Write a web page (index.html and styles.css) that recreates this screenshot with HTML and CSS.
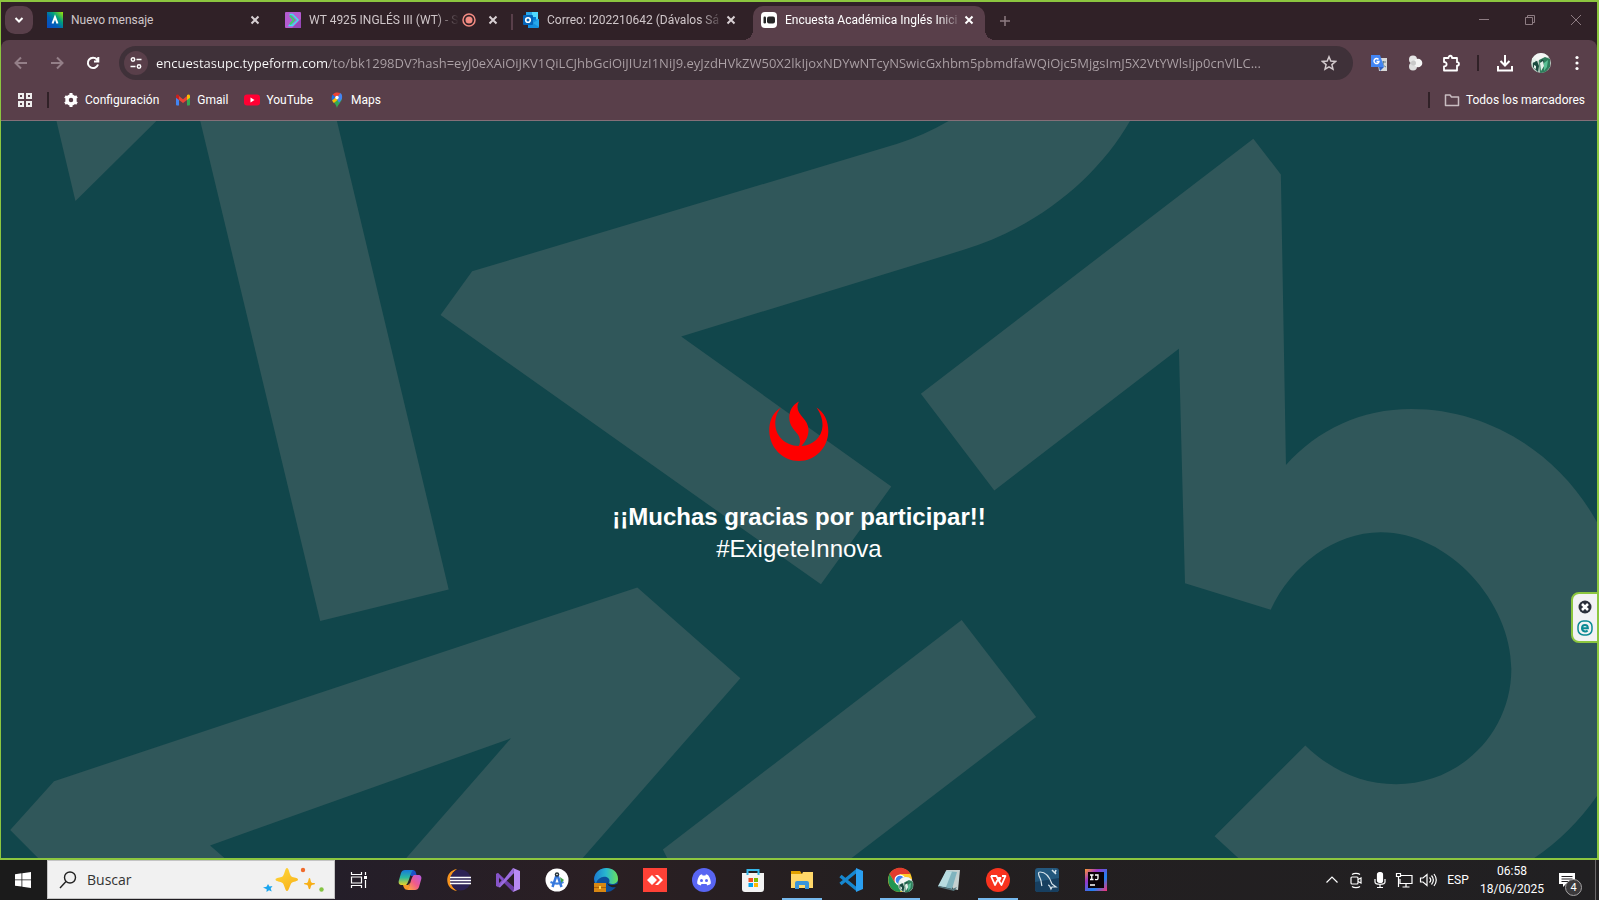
FILE: index.html
```html
<!DOCTYPE html>
<html lang="es">
<head>
<meta charset="utf-8">
<title>Encuesta Académica Inglés Inicio</title>
<link rel="stylesheet" href="styles.css">
</head>
<body>
<div class="browser">
  <header class="chrome">
    <div class="tabstrip">
      <button class="tab-search" aria-label="Buscar pestañas"><svg width="10" height="10" viewBox="0 0 10 10"><path d="M1.500 3l3.500 3.500L8.500 3" fill="none" stroke="#fff" stroke-width="2"/></svg></button>
      <div class="tabs">
        <div class="tab">
          <svg class="fav" viewBox="0 0 16 16"><defs><linearGradient id="nm" x1="1" y1="0" x2="0" y2="1"><stop offset="0" stop-color="#a5e800"/><stop offset=".35" stop-color="#00a07c"/><stop offset=".6" stop-color="#0061b8"/><stop offset="1" stop-color="#0a49c0"/></linearGradient></defs><path fill="url(#nm)" d="M0 0h16v16H0z"/><path d="M5.500 11.500L8 5l2.500 6.500" fill="none" stroke="#fff" stroke-width="2"/></svg>
          <span class="title">Nuevo mensaje</span>
          <button class="close" aria-label="Cerrar"><svg width="10" height="10" viewBox="0 0 10 10"><path d="M1.500 1.500l7 7m0-7l-7 7"/></svg></button>
        </div>
        <div class="tab">
          <svg class="fav" viewBox="0 0 16 16"><rect width="16" height="16" rx="1" fill="#b45bd0"/><path d="M7 16L16 7v9z" fill="#9747b8"/><path d="M4.500 2.500h3L13 8l-5.500 5.500h-3L8 10" fill="none" stroke="#40e0ee" stroke-width="1.500"/><path d="M5 3.500L9 8l-4 4.500" fill="none" stroke="#39d06d" stroke-width="2"/></svg>
          <span class="title fade">WT 4925 INGLÉS III (WT) - S</span>
          <svg class="rec" viewBox="0 0 16 16"><circle cx="8" cy="8" r="6" fill="none" stroke="#f28b82" stroke-width="1.500"/><circle cx="8" cy="8" r="3.500" fill="#f28b82"/></svg>
          <button class="close" aria-label="Cerrar"><svg width="10" height="10" viewBox="0 0 10 10"><path d="M1.500 1.500l7 7m0-7l-7 7"/></svg></button>
        </div>
        <div class="tab divided">
          <svg class="fav" viewBox="0 0 16 16"><path fill="#50d9ff" d="M8 0h7v8H8z"/><path fill="#28a8ea" d="M3 0h6v8H3z"/><path fill="#0078d4" d="M4 5h9v6H4z"/><path fill="#1490df" d="M5 9l11-2v8a1 1 0 0 1-1 1H5z"/><path fill="#28a8ea" d="M16 7v8l-6-4z"/><rect y="3" width="10" height="10" rx="1" fill="#0364b8"/><circle cx="5" cy="8" r="2.300" fill="none" stroke="#fff" stroke-width="1.600"/></svg>
          <span class="title fade">Correo: I202210642 (Dávalos Sá</span>
          <button class="close" aria-label="Cerrar"><svg width="10" height="10" viewBox="0 0 10 10"><path d="M1.500 1.500l7 7m0-7l-7 7"/></svg></button>
        </div>
        <div class="tab active">
          <svg class="fav" viewBox="0 0 16 16"><rect width="16" height="16" rx="4" fill="#fff"/><rect x="2.500" y="4.500" width="2.500" height="7" rx="1.200" fill="#262627"/><rect x="6" y="4.500" width="8" height="7" rx="2" fill="#262627"/></svg>
          <span class="title fade">Encuesta Académica Inglés Inici</span>
          <button class="close" aria-label="Cerrar"><svg width="10" height="10" viewBox="0 0 10 10"><path d="M1.500 1.500l7 7m0-7l-7 7"/></svg></button>
        </div>
      </div>
      <button class="new-tab" aria-label="Nueva pestaña"><svg width="12" height="12" viewBox="0 0 12 12"><path d="M6 1v10M1 6h10" stroke="#8d7c82" stroke-width="1.500"/></svg></button>
      <div class="window-controls">
        <button aria-label="Minimizar"><svg width="12" height="12" viewBox="0 0 12 12"><path d="M1 5.500h10"/></svg></button>
        <button aria-label="Restaurar"><svg width="12" height="12" viewBox="0 0 12 12"><path d="M1.500 3.500h7v7h-7zM3.500 3.500v-2h7v7h-2"/></svg></button>
        <button aria-label="Cerrar ventana"><svg width="12" height="12" viewBox="0 0 12 12"><path d="M1 1l10 10M11 1L1 11"/></svg></button>
      </div>
    </div>

    <div class="toolbar">
      <button class="nav" aria-label="Atrás"><svg class="dim" width="16" height="16" viewBox="0 0 16 16"><path d="M14 8H3M8 2.500L2.500 8 8 13.500"/></svg></button>
      <button class="nav" aria-label="Adelante"><svg class="dim" width="16" height="16" viewBox="0 0 16 16"><path d="M2 8h11M8 2.500L13.500 8 8 13.500"/></svg></button>
      <button class="nav" aria-label="Recargar"><svg width="16" height="16" viewBox="0 0 16 16"><path d="M13 9.500A5.200 5.200 0 1 1 12 4.500l1.500 1.700M13.300 2v4.500H9" /></svg></button>
      <div class="omnibox">
        <button class="site-info" aria-label="Información del sitio"><svg width="14" height="14" viewBox="0 0 14 14"><circle cx="4" cy="3.500" r="1.700"/><path d="M7.500 3.500h5M1.500 10.500h5"/><circle cx="10" cy="10.500" r="1.700"/></svg></button>
        <input class="url" type="text" aria-label="Dirección" value="encuestasupc.typeform.com/to/bk1298DV?hash=eyJ0eXAiOiJKV1QiLCJhbGciOiJIUzI1NiJ9.eyJzdHVkZW50X2lkIjoxNDYwNTcyNSwicGxhbm5pbmdfaWQiOjc5MjgsImJ5X2VtYWlsIjp0cnVlLC...">
        <button class="star" aria-label="Añadir a marcadores"><svg width="16" height="16" viewBox="0 0 16 16"><path d="M8 1.800l1.800 4.300 4.700.4-3.600 3.100 1.100 4.600L8 11.800l-4 2.400 1.100-4.600L1.500 6.500l4.700-.4z"/></svg></button>
      </div>
      <div class="extensions">
        <button aria-label="Traductor"><svg width="18" height="18" viewBox="0 0 18 18"><path fill="#d8d8d8" d="M7 4h10v13H9z"/><path d="M11 8h5M13.500 7v1c0 2-1 4-3 5M12 9c1 2 2 3 4 4" stroke="#607d8b" fill="none"/><path fill="#4285f4" d="M1 1h9l4 12H1z"/><path fill="#3060c0" d="M9 13h5l-4 4z"/><path d="M8.500 5.500A2.500 2.500 0 1 0 9 7.500H6.500" fill="none" stroke="#fff" stroke-width="1.400"/></svg></button>
        <button aria-label="Extensión"><svg width="18" height="18" viewBox="0 0 18 18"><circle cx="7" cy="5.500" r="4" fill="#e6e6e6"/><circle cx="7" cy="12.500" r="4" fill="#dedede"/><circle cx="12" cy="9" r="4.300" fill="#f4f4f4" /><circle cx="7.500" cy="9" r="2.500" fill="#c9c9c9"/></svg></button>
        <button aria-label="Extensiones"><svg width="18" height="18" viewBox="0 0 18 18"><path d="M2 4h4.500C6.500 1 10 1 10 4H15v4.200c2.600 0 2.600 3.400 0 3.400V16.500H2v-4.200c3.500 0 3.500-4.300 0-4.300z" fill="none" stroke="#fff" stroke-width="1.800" stroke-linejoin="round"/></svg></button>
        <span class="bar"></span>
        <button aria-label="Descargas"><svg width="18" height="18" viewBox="0 0 18 18"><path d="M9 1v10M4.500 7L9 11.500 13.500 7M2 12v4.500h14V12" fill="none" stroke="#fff" stroke-width="2"/></svg></button>
        <button aria-label="Perfil"><svg width="20" height="20" viewBox="0 0 20 20"><defs><clipPath id="av"><circle cx="10" cy="10" r="10"/></clipPath></defs><g id="avatar" clip-path="url(#av)"><path fill="#b9cdc3" d="M0 0h20v20H0z"/><path fill="#f4f6f5" d="M5 0h10l3 4-7 2-5 2-5-2z"/><path fill="#2f7d5c" d="M8 7l6-3 5 2v8l-5 6H9z"/><path fill="#1a4a3f" d="M2 9l4-1 2 5-1 6-5-5zM11 6l2 2-1 3-3-2z"/><path fill="#e4f0ea" d="M9 10l3-2 1 5-3 5zM1 4l4 2-1 3-3 1zM3 12l2 1v3l-2-1z"/><path fill="#5ac095" d="M13 10l4-3-1 7-3 4z"/></g></svg></button>
        <button aria-label="Menú"><svg width="18" height="18" viewBox="0 0 18 18" fill="#fff"><circle cx="9" cy="3.500" r="1.600"/><circle cx="9" cy="9" r="1.600"/><circle cx="9" cy="14.500" r="1.600"/></svg></button>
      </div>
    </div>

    <nav class="bookmarks">
      <button class="apps" aria-label="Aplicaciones"><svg width="16" height="16" viewBox="0 0 16 16"><path d="M2 2h4v4H2zM10 2h4v4h-4zM2 10h4v4H2zM10 10h4v4h-4z" fill="none" stroke="#eee" stroke-width="2"/></svg></button>
      <span class="bar"></span>
      <a href="#"><svg width="16" height="16" viewBox="0 0 16 16"><circle cx="8" cy="8" r="4" fill="none" stroke="#fff" stroke-width="3.500"/><path d="M8 1v3M8 12v3M2 4.500L4.500 6M11.500 10l2.500 1.500M2 11.500L4.500 10M11.500 6L14 4.500" stroke="#fff" stroke-width="3"/></svg>Configuración</a>
      <a href="#"><svg width="16" height="16" viewBox="0 0 16 16"><path fill="#4285f4" d="M1 4h3v9.500H2a1 1 0 0 1-1-1z"/><path fill="#34a853" d="M12 4h3v8.500a1 1 0 0 1-1 1h-2z"/><path fill="#ea4335" d="M4 4l4 3.200L12 4v4l-4 3-4-3z"/><path fill="#c5221f" d="M1 4c0-1.500 1.600-2 3-1v5L1 5.800z"/><path fill="#fbbc04" d="M15 4c0-1.500-1.600-2-3-1v5l3-2.200z"/></svg>Gmail</a>
      <a href="#"><svg width="16" height="16" viewBox="0 0 16 16"><rect y="2.500" width="16" height="11" rx="3" fill="#ff0033"/><path fill="#fff" d="M6.500 5.500v5L10.500 8z"/></svg>YouTube</a>
      <a href="#"><svg width="16" height="16" viewBox="0 0 16 16"><path fill="#34a853" d="M3 8c2 3 4 4 5 8 1-4 5-6 5-10H9z"/><path fill="#fbbc04" d="M3 8.300L9 3l2 3-6.200 5C4 10 3.300 9 3 8.300z"/><path fill="#4285f4" d="M7 5l4.500-4C13 2.200 13.400 4 13 6.500 12.500 8 11 9.500 10 10.700z"/><path fill="#1a73e8" d="M3.700 2.500L7 5 3 8.500C2.300 6 2.600 4 3.700 2.500z"/><path fill="#ea4335" d="M3.700 2.500C5.500 0 9 0 11.500 1L7.500 6z"/><circle cx="8" cy="5.500" r="1.700" fill="#fff"/></svg>Maps</a>
      <span class="bar push"></span>
      <a class="all" href="#"><svg width="16" height="16" viewBox="0 0 16 16"><path d="M1.500 3h4.500l1.500 2h7v8.500h-13z" fill="none" stroke="#c9bdc1" stroke-width="1.500" stroke-linejoin="round"/></svg>Todos los marcadores</a>
    </nav>
  </header>

  <main class="page">
    <svg class="backdrop" viewBox="1 118 1565 724" preserveAspectRatio="xMidYMid slice" aria-hidden="true">
      <path d="M55 117H155L74 197z"/>
      <path d="M196 117H330L440 578 314 609z"/>
      <path d="M933 117Q908 132 880 141L463 266 432 309 805 573 874 477 668 330 945 245C1020 222 1078 172 1109 117z"/>
      <path d="M1229 136L1256 171 1261 456C1292 421 1335 401 1384 401C1460 401 1530 445 1567 514L1600 580V720L1567 779Q1540 818 1502 843H1216L1191 820 1280 731C1305 755 1335 769 1369 769C1432 769 1482 718 1482 656C1482 590 1420 522 1354 522C1308 522 1266 555 1246 598L1162 572 1156 342 975 481 903 386z"/>
      <path d="M625 576L726 665 570 843H397L501 724 206 829 222 843H39L10 814 53 766z"/>
      <path d="M943 608L1016 703 833 843H655L650 833z"/>
    </svg>
    <section class="thanks">
      <svg class="logo" width="60" height="60" viewBox="0 0 60 60" fill="#f00" aria-label="UPC"><path d="M12 6.500C3 12 0 21 .3 30.500C.8 47 14 60 30 60S59 47 59.300 30.500C59.500 20 55 11 47.500 6.500C52 13 53.700 19 53.500 25C53 36 44 44.500 32.500 45C37 40 39.500 35 39.500 29C39.500 18 28.500 15 28.500 6C28.500 3.500 29 2 30 .5C24 3 20 10 20.300 17C20.700 29 31 31 31 40C31 42 30.500 44 29.500 45C16 44.500 6.500 35 6.300 23C6.200 17 8 11 12 6.500z"/></svg>
      <h1>¡¡Muchas gracias por participar!!</h1>
      <p>#ExigeteInnova</p>
    </section>
    <aside class="widget">
      <button aria-label="Cerrar panel"><svg width="14" height="14" viewBox="0 0 14 14"><circle cx="7" cy="7" r="6.500" fill="#2b2f3a"/><path d="M4 4l6 6M10 4l-6 6" stroke="#fff" stroke-width="2.500"/></svg></button>
      <button aria-label="ESET"><svg width="16" height="16" viewBox="0 0 16 16"><rect x="1" y="1" width="14" height="14" rx="5.500" fill="none" stroke="#0b8a94" stroke-width="1.500"/><path d="M4.700 8.200h6.200C10.900 3.800 5 3.800 5 8.200c0 3.500 4 3.800 5.600 2.300" fill="none" stroke="#0b8a94" stroke-width="2"/></svg></button>
    </aside>
  </main>
</div>

<footer class="taskbar">
  <button class="start" aria-label="Inicio"><svg width="16" height="16" viewBox="0 0 16 16" fill="#fff"><path d="M0 2.200L6.500 1.300v6.200H0zM7.300 1.200L16 0v7.500H7.300zM0 8.300h6.500v6.300L0 13.700zM7.300 8.300H16V16l-8.700-1.200z"/></svg></button>
  <label class="search">
    <svg width="18" height="18" viewBox="0 0 18 18"><circle cx="11" cy="6.500" r="5.500" fill="none" stroke="#222" stroke-width="1.400"/><path d="M7 10.500L1 17" stroke="#222" stroke-width="1.400"/></svg>
    <input type="text" placeholder="Buscar" aria-label="Buscar">
    <svg width="62" height="26" viewBox="0 0 62 26"><defs><linearGradient id="gold" x2="1" y2="1"><stop offset="0" stop-color="#ffd83b"/><stop offset="1" stop-color="#f5a30d"/></linearGradient></defs><path fill="url(#gold)" d="M24 1c2 0 2.500 7 4.500 8.500S35 10.500 35 12.500s-5 2-6.500 3.500S26 24 24 24s-2.500-6.500-4.500-8-7-1.500-7-3.500 5-1.500 7-3S22 1 24 1zM46.500 11c1.200 0 1 3.500 2 4.500s3.500 0 3.500 1.200-2.500.5-3.500 1.500-.8 4-2 4-1-3-2-4-3.500-.3-3.500-1.500 2.500-.2 3.500-1.200.8-4.500 2-4.500z"/><path fill="#1ba5ee" d="M5 17l1.500 2.500 3-.5-1.800 2.500 1 3-2.700-1.300L3.500 25l.2-2.700L0 20.500l3.500-.8z"/><circle cx="40" cy="3" r="2.200" fill="#f06a2c"/><circle cx="58.500" cy="22.500" r="2.200" fill="#84c441"/></svg>
  </label>
  <div class="apps-row">
    <button aria-label="Vista de tareas"><svg width="18" height="18" viewBox="0 0 18 18"><path d="M1.500 1v2.500h10V1M1.500 17v-2.500h10V17M1.500 6h10v6h-10zM15.500 1v3M15.500 9v8" fill="none" stroke="#fff" stroke-width="1.200"/><path fill="#fff" d="M14 5h3v3h-3z"/></svg></button>
    <button aria-label="Copilot"><svg width="24" height="24" viewBox="0 0 24 24"><defs><linearGradient id="c1" x2="0" y2="1"><stop offset="0" stop-color="#1679dc"/><stop offset=".5" stop-color="#2bb8a0"/><stop offset="1" stop-color="#e8d428"/></linearGradient><linearGradient id="c2" x1="1" x2="0" y2="1"><stop offset="0" stop-color="#b45be8"/><stop offset=".5" stop-color="#f05a8b"/><stop offset="1" stop-color="#ffb03a"/></linearGradient></defs><path fill="#1c52c8" d="M9 2h6c3 0 3 4 4 6h-6z"/><path fill="url(#c1)" d="M7 2h8c-3 3-4 13-7 15H4c-3 0-4-2-3-5l2-7c.7-2 2-3 4-3z"/><path fill="url(#c2)" d="M17 22H9c3-3 4-13 7-15h4c3 0 4 2 3 5l-2 7c-.7 2-2 3-4 3z"/><path fill="#f7982a" d="M5 17h5l2-2-1 6c-3 2-5 0-6-4z"/></svg></button>
    <button aria-label="Eclipse"><svg width="24" height="24" viewBox="0 0 24 24"><path fill="#f7941e" d="M10 1C-3 3-3 21 10 23 2 18 2 6 10 1z"/><circle cx="13.500" cy="12" r="10.500" fill="#2c2255"/><path d="M3 9.500h21M3 12.500h21M3 15.500h21" stroke="#fff" stroke-width="1.600"/></svg></button>
    <button aria-label="Visual Studio"><svg width="24" height="24" viewBox="0 0 24 24"><path fill="#6c3fa8" d="M0 6l2-1 16 14-1 5L0 7z"/><path fill="#8654c8" d="M0 6l2-1 5 5.500v3L2 19l-2-1zM3 9v6l3-3z" fill-rule="evenodd"/><path fill="#9b6ce0" d="M2 19L17 0l1 5L4 19.500z"/><path fill="#b88af5" d="M17 0l7 3v18l-7 3 1-4V5z"/></svg></button>
    <button aria-label="Android Studio"><svg width="24" height="24" viewBox="0 0 24 24"><circle cx="12" cy="12" r="11.500" fill="#fff"/><path d="M5.500 14c4 2 9 2 13 0" fill="none" stroke="#3d7fe0" stroke-width="2"/><path fill="#43a047" d="M15 9l4 3-3 3z"/><path d="M12 6L7.500 19M12 6l4.500 13" fill="none" stroke="#3778dc" stroke-width="2.500"/><circle cx="12" cy="6.500" r="2.200" fill="#263238"/><circle cx="12" cy="6.500" r=".8" fill="#fff"/></svg></button>
    <button aria-label="Edge"><svg width="24" height="24" viewBox="0 0 24 24"><defs><linearGradient id="ed" x2="1"><stop offset="0" stop-color="#1b7ad0"/><stop offset=".5" stop-color="#28b8cf"/><stop offset="1" stop-color="#6be05a"/></linearGradient></defs><circle cx="12" cy="12" r="12" fill="#0c4e9b"/><path fill="url(#ed)" d="M0 11C2-4 24-3 24 11c0 5-6 6-9 4 2-4-2-7-6-6-4 .5-7 4-7 8z"/><path fill="#231d21" d="M13 13c0 4 4 5 10 3l1 1-2 2c-5 1-9-1-9-6z"/><path fill="#d88713" d="M0 15h12v9H0z"/><path fill="#a85f08" d="M0 19h12v1H0z"/><path fill="#ffd24a" d="M5 18h2v3H5z"/></svg></button>
    <button aria-label="AnyDesk"><svg width="24" height="24" viewBox="0 0 24 24"><path fill="#ff4136" d="M0 0h24v24H0z"/><path fill="#fff" d="M9 7l5 5-5 5-5-5zM12 7h3l5 5-5 5h-3l5-5z"/></svg></button>
    <button aria-label="Discord"><svg width="24" height="24" viewBox="0 0 24 24"><circle cx="12" cy="12" r="12" fill="#5865f2"/><path fill="#fff" d="M8 7l2-.7.6 1.200h2.800l.6-1.200 2 .7c2 2.500 3 6 2.800 8.500-1 1-2 1.500-3.500 2L14.500 16h-5l-.8 1.500c-1.500-.5-2.500-1-3.500-2C5 13 6 9.500 8 7z"/><circle cx="9.500" cy="12.500" r="1.500" fill="#5865f2"/><circle cx="14.500" cy="12.500" r="1.500" fill="#5865f2"/></svg></button>
    <button aria-label="Microsoft Store"><svg width="24" height="24" viewBox="0 0 24 24"><path fill="#f3f3f3" d="M1 5h22v16a3 3 0 0 1-3 3H4a3 3 0 0 1-3-3z"/><path d="M6.500 7V2h11v5" fill="none" stroke="#35b6e8" stroke-width="2"/><path fill="#f25022" d="M7.500 10H12v4H7.500z"/><path fill="#7fba00" d="M13 10h4v4h-4z"/><path fill="#00a4ef" d="M7.500 15H12v4H7.500z"/><path fill="#ffb900" d="M13 15h4v4h-4z"/></svg></button>
    <button class="running" aria-label="Explorador de archivos"><svg width="24" height="24" viewBox="0 0 24 24"><path fill="#e0a100" d="M1 3h9l2 3H1z"/><path fill="#ffd869" d="M1 6h11l1-2h10v16H1z"/><path fill="#3a95d9" d="M5 21v-6a2 2 0 0 1 2-2h10a2 2 0 0 1 2 2v6h-4v-4H9v4z"/></svg></button>
    <button aria-label="Visual Studio Code"><svg width="24" height="24" viewBox="0 0 24 24"><path d="M1.500 8L18 21.500M1.500 16L18 2.500" stroke="#1687cf" stroke-width="3.500"/><path fill="#2a9ff0" d="M17 0l7 3v18l-7 3z"/></svg></button>
    <button class="running" aria-label="Chrome"><svg width="28" height="26" viewBox="0 0 28 26"><circle cx="14" cy="13" r="12" fill="#ffc928"/><path fill="#e33b2e" d="M3.600 7C8-1.500 20-1.500 24.400 7H14l-5 9z"/><path fill="#219653" d="M3.600 7C0 14 4 25 14 25l5-9H9z"/><circle cx="14" cy="13" r="5.500" fill="#fff"/><circle cx="14" cy="13" r="4.300" fill="#3f82ee"/><use href="#avatar" transform="translate(12 10) scale(.78)"/></svg></button>
    <button aria-label="Bloc de notas"><svg width="24" height="24" viewBox="0 0 24 24"><path fill="#c4d0d0" d="M9 2l14 0-2 20-5-1z"/><path fill="#7fb3be" d="M9 3l11 1-5 17-13-3z"/><path fill="#b8dce0" d="M9 3l6 .5L9 19l-8-1z"/><path fill="#57777d" d="M1 18l14 3 5-2-3 4-16-4z"/></svg></button>
    <button class="running" aria-label="WPS Office"><svg width="24" height="24" viewBox="0 0 24 24"><circle cx="12" cy="12" r="12" fill="#f8331e"/><path d="M5 8h5.500l2 5M5 8l4 9 3.500-7h2l-1.500 3 2.500 4L19.500 8H16" fill="none" stroke="#fff" stroke-width="1.800" stroke-linejoin="round"/></svg></button>
    <button aria-label="MySQL Workbench"><svg width="24" height="24" viewBox="0 0 24 24"><rect width="24" height="24" rx="3" fill="#24587d"/><path fill="#173f60" d="M0 14l24-4v11a3 3 0 0 1-3 3H3a3 3 0 0 1-3-3z"/><path d="M7 18c-1-2 0-4-2-8-2-4-2-6 0-6 6 0 10 6 12 12l4 3-4 0-1 2c-1-3-2-4-3-4" fill="none" stroke="#d7e4ec" stroke-width="1.200"/><path d="M17 2l4 4M21 2l-1 3" stroke="#d7e4ec" stroke-width="1.500"/></svg></button>
    <button aria-label="IntelliJ IDEA"><svg width="24" height="24" viewBox="0 0 24 24"><defs><linearGradient id="ij" x2="1" y2="1"><stop offset="0" stop-color="#ff9a2e"/><stop offset=".3" stop-color="#9b35c5"/><stop offset=".65" stop-color="#1a84f5"/><stop offset="1" stop-color="#ff2e70"/></linearGradient></defs><path fill="url(#ij)" d="M1 1h22v22H1z"/><path fill="#0a0308" d="M4 4h16v16H4z"/><path d="M6 7h3.500M6 11.500h3.500M7.750 7v4.500M11 7h3v3.300c0 1.500-1.500 1.700-3 1M6 17h5" fill="none" stroke="#fff" stroke-width="1.300"/></svg></button>
  </div>
  <div class="tray">
    <button aria-label="Mostrar iconos ocultos"><svg width="18" height="18" viewBox="0 0 18 18"><path d="M3.500 11.500L9 6l5.500 5.500"/></svg></button>
    <button aria-label="Reunión"><svg width="18" height="18" viewBox="0 0 18 18"><rect x="4" y="6" width="7" height="7" rx="1"/><path d="M11 8.500l3-1.500v5l-3-1.500M5 3.500c2-1.500 6-1.500 8 0M5 15.500c2 1.500 6 1.500 8 0"/></svg></button>
    <button aria-label="Micrófono"><svg width="18" height="18" viewBox="0 0 18 18"><rect x="6.500" y="1.500" width="5" height="10" rx="2"/><path d="M4 8v3c0 3 10 3 10 0V8M9 13.500V17M6 16.500h6"/></svg></button>
    <button class="net" aria-label="Red"><svg width="18" height="18" viewBox="0 0 18 18"><path d="M6 4.500h11v8H5V8M11 12.500v3M7.500 16h7M1.500 2.500h4v3h-4zM3.500 5.500V16"/></svg></button>
    <button aria-label="Volumen"><svg width="18" height="18" viewBox="0 0 18 18"><path d="M1.500 7v4H4l4 3.500v-11L4 7zM10.500 6.500c1.500 1.500 1.500 3.500 0 5M12.500 4.500c2.500 3 2.500 6 0 9M15 3c3 4 3 8 0 12"/></svg></button>
    <button class="lang">ESP</button>
    <button class="clock"><span>06:58</span><span>18/06/2025</span></button>
    <button class="notify" aria-label="Notificaciones"><svg width="18" height="18" viewBox="0 0 18 18"><path class="bubble" d="M1 2h16v11H8l-3 3v-3H1z"/><path class="lines" d="M3.500 5.500h11M3.500 8h11M3.500 10.500h8"/></svg><span class="badge">4</span></button>
  </div>
</footer>
</body>
</html>
```
FILE: styles.css
```css
* { box-sizing: border-box; }

html, body { height: 100%; }

body {
  margin: 0;
  display: flex;
  flex-direction: column;
  overflow: hidden;
  background: #231d21;
  color: #fff;
  font: 12px/16px Roboto, "Open Sans", sans-serif;
}

button {
  display: flex;
  align-items: center;
  justify-content: center;
  flex: none;
  padding: 0;
  border: 0;
  background: none;
  color: inherit;
  font: inherit;
}

svg { display: block; flex: none; }
a { color: inherit; text-decoration: none; }

.browser {
  flex: 1;
  min-height: 0;
  display: flex;
  flex-direction: column;
  border: solid #8cc63f;
  border-width: 2px 2px 2px 1px;
  background: #302127;
}

/* tabs */
.tabstrip { display: flex; align-items: center; height: 38px; background: #302127; }
.tab-search { width: 28px; height: 28px; margin: 0 0 2px 4px; border-radius: 10px; background: #593f4a; }
.tabs { display: flex; align-self: stretch; margin-left: 6px; padding-top: 4px; }
.tab {
  position: relative;
  display: flex;
  align-items: center;
  width: 238px;
  padding: 0 17px 6px 8px;
  color: #cfc6c9;
}
.fav { width: 16px; height: 16px; }
.title {
  flex: 1;
  min-width: 0;
  margin: 0 2px 0 8px;
  white-space: nowrap;
}
.fade {
  -webkit-mask-image: linear-gradient(to left, transparent, #000 24px);
  mask-image: linear-gradient(to left, transparent, #000 24px);
}
.rec { width: 16px; height: 16px; margin-right: 11px; }
.close { width: 10px; height: 16px; }
.close path { fill: none; stroke: #d8d0d3; stroke-width: 2; }
.divided::before {
  content: "";
  position: absolute;
  left: -4px;
  top: 8px;
  width: 2px;
  height: 16px;
  background: #593f4a;
}
.active {
  width: 232px;
  padding-right: 11px;
  border-radius: 10px 10px 0 0;
  background: #593f4a;
  color: #fff;
}
.active .close path { stroke: #fff; }
.active::before, .active::after {
  content: "";
  position: absolute;
  bottom: 0;
  width: 10px;
  height: 10px;
}
.active::before { left: -10px; background: radial-gradient(circle at 0 0, transparent 10px, #593f4a 10px); }
.active::after { right: -10px; background: radial-gradient(circle at 100% 0, transparent 10px, #593f4a 10px); }
.new-tab { width: 28px; height: 28px; margin-left: 6px; }
.window-controls { display: flex; gap: 4px; margin-left: auto; padding-bottom: 2px; }
.window-controls button { width: 42px; height: 34px; }
.window-controls path { fill: none; stroke: #8d7c82; }

/* toolbar */
.toolbar {
  display: flex;
  align-items: center;
  height: 46px;
  padding: 0 2px;
  border-radius: 8px 8px 0 0;
  background: #593f4a;
}
.nav { width: 36px; height: 36px; }
.nav path { fill: none; stroke: #fff; stroke-width: 2; }
.nav .dim path { stroke: #947f88; }
.omnibox {
  flex: 1;
  min-width: 0;
  display: flex;
  align-items: center;
  height: 34px;
  margin: 0 8px;
  padding: 0 16px 0 5px;
  border-radius: 17px;
  background: #3f3139;
}
.site-info { width: 24px; height: 24px; border-radius: 12px; background: #593f4a; }
.site-info svg { fill: none; stroke: #fff; stroke-width: 1.5; }
.url {
  flex: 1;
  min-width: 0;
  height: 24px;
  margin: 0 8px;
  padding: 0;
  border: 0;
  outline: 0;
  font: 13px/24px "Open Sans", "Noto Sans", sans-serif;
  text-overflow: ellipsis;
  color: transparent;
  background: linear-gradient(to right, #fff 173px, #ada2a7 173px);
  -webkit-background-clip: text;
  background-clip: text;
}
.star path { fill: none; stroke: #d3cacd; stroke-width: 1.5; }
.extensions { display: flex; align-items: center; }
.extensions button { width: 36px; height: 36px; }
.bar { width: 2px; height: 16px; background: #302127; }
.extensions .bar { margin: 0 8px; }

/* bookmarks */
.bookmarks {
  display: flex;
  align-items: center;
  height: 35px;
  padding: 0 12px 6px 16px;
  border-bottom: 1px solid #846f78;
  background: #593f4a;
}
.bookmarks .apps { margin-right: 14px; }
.bookmarks a { display: flex; align-items: center; gap: 6px; margin-left: 16px; }
.bookmarks .bar + a { margin-left: 14px; }
.push { margin-left: auto; }

/* page */
.page {
  position: relative;
  flex: 1;
  min-height: 0;
  display: flex;
  align-items: center;
  justify-content: center;
  padding-bottom: 13px;
  background: #11464b;
  font-family: "Liberation Sans", Arial, sans-serif;
}
.backdrop { position: absolute; inset: 0; width: 100%; height: 100%; fill: #30575a; }
.thanks {
  position: relative;
  display: flex;
  flex-direction: column;
  align-items: center;
  font-size: 24px;
  line-height: 32px;
}
.logo { margin-bottom: 40px; }
.thanks h1, .thanks p { margin: 0; font-size: inherit; }
.widget {
  position: absolute;
  right: -2px;
  top: 471px;
  display: flex;
  flex-direction: column;
  align-items: center;
  gap: 6px;
  padding: 6px 4px 5px;
  border: 2px solid #8cc63f;
  border-radius: 8px 0 0 8px;
  background: #f2f2f4;
}

/* taskbar */
.taskbar {
  display: flex;
  height: 40px;
  background: linear-gradient(to right, #1b1b1b 47px, #241e29 335px, #2a1f23 600px, #231f20 900px, #212022);
}
.start { width: 46px; margin-right: 1px; }
.search {
  display: flex;
  align-items: center;
  width: 288px;
  margin-bottom: 1px;
  padding: 0 9px 0 11px;
  border: 1px solid #c4c4c4;
  background: #f1f1f1;
}
.search input {
  flex: 1;
  min-width: 0;
  padding: 0 0 0 10px;
  border: 0;
  outline: 0;
  background: none;
  font: 14px/20px "Open Sans", "Noto Sans", sans-serif;
}
.search input::placeholder { color: #333; opacity: 1; }
.apps-row { display: flex; gap: 9px; padding-left: 4px; }
.apps-row button { width: 40px; }
.apps-row button:first-child { margin-right: 2px; }
.running { box-shadow: inset 0 -2px #76b9ed; }
.tray { display: flex; margin-left: auto; padding-right: 3px; }
.tray > button { width: 24px; }
.tray path, .tray rect { fill: none; stroke: #fff; stroke-width: 1.2; }
.tray .lang { width: 36px; }
.tray .clock { flex-direction: column; width: 72px; line-height: 18px; }
.tray .notify { position: relative; width: 48px; padding-left: 10px; justify-content: flex-start; border-right: 1px solid #6b686a; }
.tray .bubble { fill: #fff; stroke: none; }
.tray .lines { stroke: #242124; }
.tray button:nth-child(3) rect { fill: #fff; }
.badge {
  position: absolute;
  left: 17px;
  top: 19px;
  width: 17px;
  height: 17px;
  border: 1px solid #a5a3a4;
  border-radius: 50%;
  background: #3b393b;
  font-size: 11px;
  line-height: 15px;
  text-align: center;
}
```
